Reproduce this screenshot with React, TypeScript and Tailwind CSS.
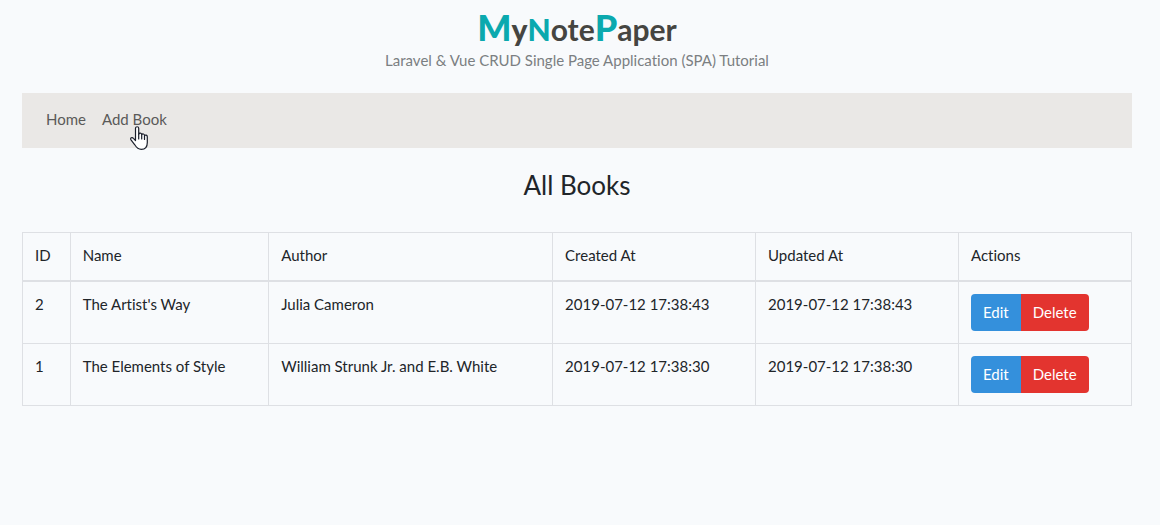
type Book = {
  id: number;
  name: string;
  author: string;
  createdAt: string;
  updatedAt: string;
};

const books: Book[] = [
  { id: 2, name: "The Artist's Way", author: "Julia Cameron", createdAt: "2019-07-12 17:38:43", updatedAt: "2019-07-12 17:38:43" },
  { id: 1, name: "The Elements of Style", author: "William Strunk Jr. and E.B. White", createdAt: "2019-07-12 17:38:30", updatedAt: "2019-07-12 17:38:30" },
];

const columns = [
  { label: "ID", width: "w-[4.3%]" },
  { label: "Name", width: "w-[17.9%]" },
  { label: "Author", width: "w-[25.6%]" },
  { label: "Created At", width: "w-[18.3%]" },
  { label: "Updated At", width: "w-[18.3%]" },
  { label: "Actions", width: "w-[15.6%]" },
];

const textCell = "border border-[#dee0e4] px-3 pt-[11px] pb-[13px]";

function Logo() {
  return (
    <a href="#" className="flex h-[39px] items-baseline text-[30px] leading-[34px] font-black text-[#454541]">
      <span className="text-[36px] text-[#0ba9ae]">M</span>
      <span>y</span>
      <span className="text-[#0ba9ae]">N</span>
      <span className="font-bold">ote</span>
      <span className="text-[36px] text-[#0ba9ae]">P</span>
      <span className="font-bold">aper</span>
    </a>
  );
}

function HandCursor() {
  return (
    <svg viewBox="0 0 18 24" className="pointer-events-none absolute top-[18px] left-7 h-6 w-[18px]" aria-hidden="true">
      <path
        d="M5.5 14.5V2.3C5.5 .2 8.7 .2 8.7 2.3V8.2C9.2 6.7 11.7 6.9 11.7 8.7C12.4 7.4 14.5 7.8 14.5 9.5C15.4 8.6 17.3 9.1 17.3 10.8V16.5C17.3 20.7 15 23.4 11.3 23.4C7.6 23.4 6.3 21.3 4.8 18.8L1 13.8C-.2 12 2.1 10.8 3.4 12.3Z"
        fill="#fff"
        stroke="#1b1f2b"
        strokeWidth="1.2"
        strokeLinejoin="round"
      />
      <path d="M8.7 8V13M11.7 9V13M14.5 10V13.5" fill="none" stroke="#1b1f2b" strokeWidth="1.2" strokeLinecap="round" />
    </svg>
  );
}

export default function App() {
  return (
    <div className="min-h-screen bg-[#f8fafc] pt-[10px] pr-7 pb-8 pl-[22px] font-['Lato',sans-serif] text-[15px] leading-[23px] text-[#212529] [font-variant-ligatures:none]">
      <header className="flex flex-col items-center">
        <Logo />
        <p className="text-[#7b7f82]">Laravel &amp; Vue CRUD Single Page Application (SPA) Tutorial</p>
      </header>

      <nav className="mt-[21px] flex gap-4 bg-[#eae8e6] px-6 pt-[15px] pb-[17px] text-[#5a5a59]">
        <a href="#home">Home</a>
        <a href="#add" className="relative">
          Add Book
          <HandCursor />
        </a>
      </nav>

      <main>
        <h1 className="mt-[22px] text-center text-[26px] leading-[31px] font-normal">All Books</h1>
        <table className="mt-[31px] w-full table-fixed border-collapse border border-[#dee0e4] text-left">
          <thead>
            <tr>
              {columns.map((c) => (
                <th key={c.label} scope="col" className={`${c.width} ${textCell} border-b-2 font-normal`}>
                  {c.label}
                </th>
              ))}
            </tr>
          </thead>
          <tbody>
            {books.map((b) => (
              <tr key={b.id} className="align-top">
                <td className={textCell}>{b.id}</td>
                <td className={textCell}>{b.name}</td>
                <td className={textCell}>{b.author}</td>
                <td className={textCell}>{b.createdAt}</td>
                <td className={textCell}>{b.updatedAt}</td>
                <td className="border border-[#dee0e4] p-3">
                  <div className="flex text-white">
                    <a href={`#edit-${b.id}`} className="rounded-l bg-[#3490dc] px-3 py-[7px]">
                      Edit
                    </a>
                    <button type="button" className="rounded-r bg-[#e3342f] px-3 py-[7px]">
                      Delete
                    </button>
                  </div>
                </td>
              </tr>
            ))}
          </tbody>
        </table>
      </main>
    </div>
  );
}
